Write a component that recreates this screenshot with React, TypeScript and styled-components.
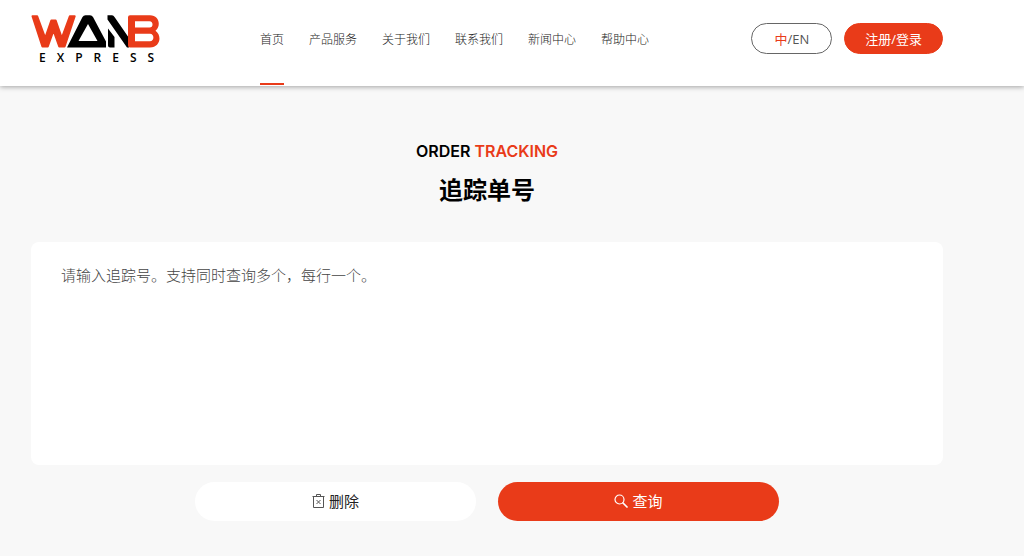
import React from 'react';
import styled, { createGlobalStyle } from 'styled-components';

const sans = '"Open Sans", "Noto Sans CJK SC", sans-serif';
const red = '#e93b19';

const GlobalStyle = createGlobalStyle`
  *, *::before, *::after { box-sizing: border-box; }
  body {
    margin: 0;
    background: #f8f8f8;
    color: #000;
    font-family: ${sans};
  }
`;

const Header = styled.header`
  display: flex;
  align-items: flex-start;
  height: 86px;
  padding: 0 81px 0 31px;
  background: #fff;
  box-shadow: 0 1px 5px rgba(0, 0, 0, 0.35);
`;

const LogoLink = styled.a`
  display: flex;
  flex-direction: column;
  width: 129px;
  margin: 15px 100px 0 0;
  color: #000;
  text-decoration: none;
`;

const LogoMark = styled.svg`
  display: block;
  width: 129px;
  height: 33px;
`;

const LogoWord = styled.span`
  padding: 3px 0 0 8px;
  font: 600 12px/14px "Open Sans", sans-serif;
  letter-spacing: 11px;
  white-space: nowrap;
`;

const Nav = styled.nav`
  display: flex;
  flex: 1;
  gap: 25px;
`;

const NavLink = styled.a<{ $active?: boolean }>`
  height: 85px;
  padding-top: 30px;
  border-bottom: 2px solid ${({ $active }) => ($active ? red : 'transparent')};
  color: #222;
  font-size: 12px;
  font-weight: 300;
  line-height: 20px;
  text-decoration: none;
  white-space: nowrap;
`;

const HeaderActions = styled.div`
  display: flex;
  gap: 12px;
  padding-top: 23px;
`;

const PillButton = styled.button<{ $primary?: boolean }>`
  height: 31px;
  padding: 0 ${({ $primary }) => ($primary ? 20 : 22)}px;
  border: 1px solid ${({ $primary }) => ($primary ? red : '#666')};
  border-radius: 16px;
  background: ${({ $primary }) => ($primary ? red : '#fff')};
  color: ${({ $primary }) => ($primary ? '#fff' : '#555')};
  font: 400 13px/20px ${sans};
  white-space: nowrap;
  cursor: pointer;
`;

const Accent = styled.span`
  color: ${red};
`;

const Main = styled.main`
  padding: 53px 81px 35px 31px;
`;

const Eyebrow = styled.p`
  margin: 0;
  font: 600 16px/24px Inter, sans-serif;
  text-align: center;
`;

const Title = styled.h1`
  margin: 9px 0 34px;
  font-size: 24px;
  font-weight: 700;
  line-height: 36px;
  text-align: center;
`;

const TrackingInput = styled.textarea`
  display: block;
  width: 100%;
  height: 223px;
  padding: 21px 30px;
  border: 0;
  border-radius: 8px;
  outline: 0;
  background: #fff;
  color: #333;
  font: 300 15px/24px ${sans};
  resize: none;

  &::placeholder {
    color: #444;
    opacity: 1;
  }
`;

const FormActions = styled.div`
  display: flex;
  justify-content: center;
  gap: 22px;
  margin-top: 17px;
`;

const ActionButton = styled.button<{ $primary?: boolean }>`
  display: flex;
  align-items: center;
  justify-content: center;
  gap: 4px;
  width: 281px;
  height: 39px;
  padding: 0 0 2px;
  border: 0;
  border-radius: 20px;
  background: ${({ $primary }) => ($primary ? red : '#fff')};
  color: ${({ $primary }) => ($primary ? '#fff' : '#222')};
  font: 400 15px/24px ${sans};
  cursor: pointer;
`;

const links = ['首页', '产品服务', '关于我们', '联系我们', '新闻中心', '帮助中心'];

export default function App() {
  return (
    <>
      <GlobalStyle />
      <Header>
        <LogoLink href="#" aria-label="WANB EXPRESS">
          <LogoMark viewBox="0 0 129 33" aria-hidden="true">
            <path d="M36 32.5 L51.5 2 Q52.5 0.3 54.5 0.3 H59 Q61 0.3 62 2 L75 26.5 V32.5 Z M57 9 L47.5 26 H66.5 Z" fillRule="evenodd" />
            <path d="M76.5 0.3 H81 Q82.5 0.3 83.5 2 L98 23 V32.5 H96 L76.5 4.5 Z M77 13.5 L83.5 22 V32.5 H79 Q77 32.5 77 30.5 Z" />
            <path d="M1.5 1.3 H6.2 L14.2 23 L20.3 5.5 H24.7 L30.8 23 L38.8 1.3 H43.7 L33.6 31.5 H28.2 L22.5 15.5 L16.8 31.5 H11.4 Z" fill={red} stroke={red} strokeWidth="2" strokeLinejoin="round" />
            <path d="M99 0.3 H119 C128 0.3 130.5 10.5 124.5 15.8 C131.5 21 129 32.5 119 32.5 H99 Q97 32.5 97 30.5 V2.3 Q97 0.3 99 0.3 Z M104 6.3 V12.5 H118.5 C122.5 12.5 122.5 6.3 118.5 6.3 Z M104 18.8 V26.3 H119 C123.5 26.3 123.5 18.8 119 18.8 Z" fill={red} fillRule="evenodd" />
          </LogoMark>
          <LogoWord>EXPRESS</LogoWord>
        </LogoLink>
        <Nav>
          {links.map((label, i) => (
            <NavLink key={label} href="#" $active={i === 0}>{label}</NavLink>
          ))}
        </Nav>
        <HeaderActions>
          <PillButton type="button"><Accent>中</Accent>/EN</PillButton>
          <PillButton type="button" $primary>注册/登录</PillButton>
        </HeaderActions>
      </Header>
      <Main>
        <Eyebrow>ORDER <Accent>TRACKING</Accent></Eyebrow>
        <Title>追踪单号</Title>
        <form onSubmit={(e) => e.preventDefault()}>
          <TrackingInput aria-label="追踪单号" placeholder="请输入追踪号。支持同时查询多个，每行一个。" />
          <FormActions>
            <ActionButton type="reset">
              <svg width="13" height="16" viewBox="0 0 13 16" fill="none" stroke="#555" aria-hidden="true">
                <path d="M0.5 3.5 H12.5 M1.5 3.5 V14.5 H11.5 V3.5 M4.5 3 V1.5 H8.5 V3 M4.5 7 L8.5 11 M8.5 7 L4.5 11" />
              </svg>
              删除
            </ActionButton>
            <ActionButton type="submit" $primary>
              <svg width="14" height="14" viewBox="0 0 14 14" fill="none" stroke="#fff" strokeLinecap="round" aria-hidden="true">
                <circle cx="5.5" cy="5.5" r="4.5" strokeWidth="1.2" />
                <path d="M9 9 L13 13" strokeWidth="1.7" />
              </svg>
              查询
            </ActionButton>
          </FormActions>
        </form>
      </Main>
    </>
  );
}
